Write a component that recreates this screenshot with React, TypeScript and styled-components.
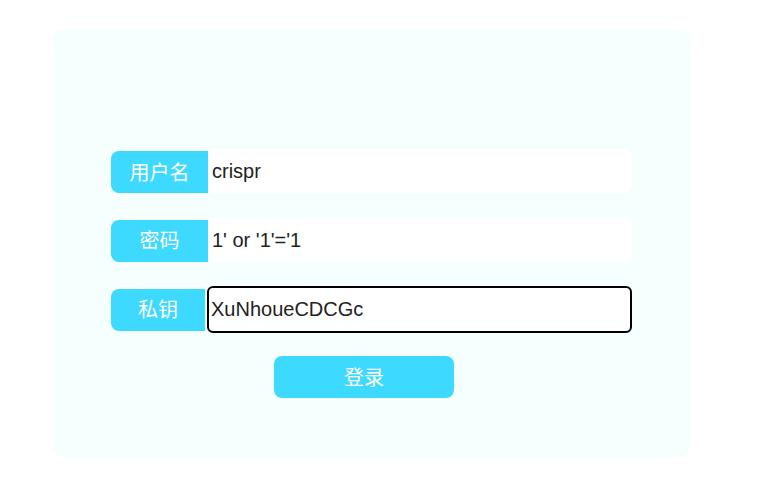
import React from "react";
import styled, { createGlobalStyle } from "styled-components";

const Global = createGlobalStyle`
  html, body { margin: 0; padding: 0; background: #ffffff; }
  body { font-family: "Liberation Sans", "Noto Sans CJK SC", Arial, sans-serif; }
`;

const Page = styled.div`
  padding: 30px 0 0 52px;
`;

const Card = styled.div`
  box-sizing: border-box;
  width: 638px;
  height: 427px;
  background: #f5fffe;
  border-radius: 10px;
  padding: 119px 0 0 59px;
  display: flex;
  flex-direction: column;
`;

const Row = styled.div<{ $h: number; $mb: number; $align: string }>`
  display: flex;
  align-items: ${(p) => p.$align};
  width: 521px;
  height: ${(p) => p.$h}px;
  margin-bottom: ${(p) => p.$mb}px;
`;

const Label = styled.div<{ $w: number }>`
  box-sizing: border-box;
  flex: 0 0 ${(p) => p.$w}px;
  height: 42px;
  background: #3dd9ff;
  border-radius: 8px 0 0 8px;
  color: #ffffff;
  font-family: "Noto Sans CJK SC", sans-serif;
  font-size: 20px;
  display: flex;
  align-items: center;
  justify-content: center;
  padding-bottom: 2px;
`;

const Field = styled.input<{ $focus?: boolean }>`
  box-sizing: border-box;
  flex: 1;
  min-width: 0;
  height: 100%;
  margin-left: ${(p) => (p.$focus ? 2 : 0)}px;
  border: ${(p) => (p.$focus ? "2px solid #000" : "none")};
  border-radius: ${(p) => (p.$focus ? "6px" : "0 8px 8px 0")};
  background: #ffffff;
  font-family: "Liberation Sans", Arial, sans-serif;
  font-size: 20px;
  color: #222;
  padding: 0 0 0 ${(p) => (p.$focus ? 2 : 4)}px;
  outline: none;
`;

const Button = styled.button`
  box-sizing: border-box;
  margin-left: 163px;
  width: 180px;
  height: 42px;
  border: none;
  border-radius: 8px;
  background: #3dd9ff;
  color: #ffffff;
  font-family: "Noto Sans CJK SC", sans-serif;
  font-size: 20px;
  padding-bottom: 2px;
  cursor: pointer;
`;

export default function App() {
  return (
    <>
      <Global />
      <Page>
        <Card>
          <Row $h={44} $mb={25} $align="flex-end">
            <Label $w={97}>用户名</Label>
            <Field defaultValue="crispr" />
          </Row>
          <Row $h={45} $mb={23} $align="center">
            <Label $w={97}>密码</Label>
            <Field defaultValue="1' or '1'='1" />
          </Row>
          <Row $h={47} $mb={23} $align="center">
            <Label $w={94}>私钥</Label>
            <Field $focus defaultValue="XuNhoueCDCGc" />
          </Row>
          <Button>登录</Button>
        </Card>
      </Page>
    </>
  );
}
